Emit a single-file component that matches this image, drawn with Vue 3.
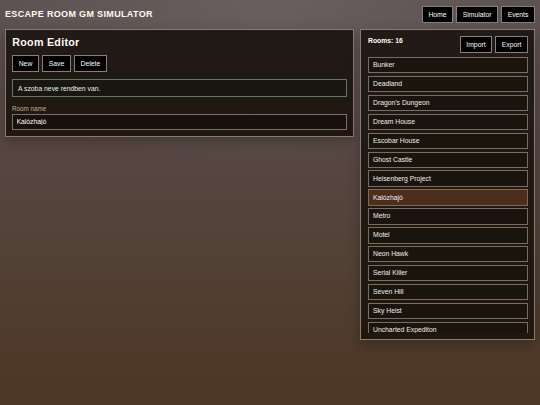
<template>
  <div class="page">
    <header class="topbar">
      <h1 class="brand">ESCAPE ROOM GM SIMULATOR</h1>
      <nav class="actions">
        <button v-for="link in links" :key="link" class="btn">{{ link }}</button>
      </nav>
    </header>

    <main class="layout">
      <section class="panel editor">
        <h2 class="title">Room Editor</h2>
        <div class="actions">
          <button class="btn" @click="createRoom">New</button>
          <button class="btn" @click="saveRoom">Save</button>
          <button class="btn" @click="deleteRoom">Delete</button>
        </div>
        <p class="status">A szoba neve rendben van.</p>
        <label for="room-name" class="field-label">Room name</label>
        <input id="room-name" v-model="roomName" class="field" type="text" spellcheck="false" />
      </section>

      <aside class="panel rooms">
        <div class="rooms-header">
          <strong class="count">Rooms: {{ rooms.length }}</strong>
          <div class="actions">
            <button class="btn">Import</button>
            <button class="btn">Export</button>
          </div>
        </div>
        <div class="room-list">
          <button
            v-for="(room, index) in rooms"
            :key="index"
            class="room"
            :class="{ active: index === selected }"
            @click="selectRoom(index)"
          >{{ room }}</button>
        </div>
      </aside>
    </main>
  </div>
</template>

<script setup>
import { ref } from 'vue';

const links = ['Home', 'Simulator', 'Events'];

const rooms = ref([
  'Bunker',
  'Deadland',
  "Dragon's Dungeon",
  'Dream House',
  'Escobar House',
  'Ghost Castle',
  'Heisenberg Project',
  'Kalózhajó',
  'Metro',
  'Motel',
  'Neon Hawk',
  'Serial Killer',
  'Seven Hill',
  'Sky Heist',
  'Uncharted Expediton',
  '',
]);

const selected = ref(7);
const roomName = ref(rooms.value[selected.value]);

const selectRoom = (index) => {
  selected.value = index;
  roomName.value = rooms.value[index];
};

const createRoom = () => {
  selected.value = -1;
  roomName.value = '';
};

const saveRoom = () => {
  if (selected.value < 0) {
    rooms.value.push(roomName.value);
    selected.value = rooms.value.length - 1;
  } else {
    rooms.value[selected.value] = roomName.value;
  }
};

const deleteRoom = () => {
  if (selected.value < 0) return;
  rooms.value.splice(selected.value, 1);
  createRoom();
};
</script>

<style>
body {
  margin: 0;
  overflow: hidden;
}
</style>

<style scoped>
.page {
  box-sizing: border-box;
  height: 100vh;
  padding: 6px 5px;
  color: #fffaf5;
  font-family: "Liberation Sans", Arial, sans-serif;
  font-size: 6.8px;
  background:
    radial-gradient(ellipse 60% 42% at 50% 0, rgba(118, 112, 110, 0.5), transparent),
    linear-gradient(180deg, #5c4f50 0%, #574744 36%, #503f31 72%, #4f3a2b 85%, #4c3625 100%);
}

.topbar {
  display: flex;
  align-items: center;
  justify-content: space-between;
  height: 17px;
  margin-bottom: 6px;
}

.brand {
  margin: 0;
  font-size: 9px;
  line-height: 11px;
  letter-spacing: 0.34px;
}

.actions {
  display: flex;
  gap: 3px;
}

.btn {
  box-sizing: border-box;
  height: 17px;
  padding: 0 5.6px;
  border: 1px solid #85807c;
  background: #000;
  color: #fffaf5;
  font: inherit;
  line-height: 15px;
  cursor: pointer;
}

.layout {
  display: grid;
  grid-template-columns: 349px 175px;
  gap: 6px;
  align-items: start;
}

.panel {
  box-sizing: border-box;
  padding: 6px;
  border: 1px solid #8c7c70;
  background: linear-gradient(180deg, #221a17, #20170f);
  box-shadow: 0 5px 12px rgba(0, 0, 0, 0.25);
}

.editor {
  height: 108px;
}

.editor .btn {
  padding: 0 5.7px;
}

.title {
  margin: 0 0 6px;
  padding-left: 0.3px;
  font-size: 10.7px;
  line-height: 13px;
  letter-spacing: 0.28px;
}

.status {
  box-sizing: border-box;
  height: 18px;
  margin: 7px 0 8px;
  padding: 1px 5px 0;
  border: 1px solid #62796a;
  background: #19150f;
  color: #e2f2e4;
  line-height: 16px;
}

.field-label {
  display: block;
  margin-bottom: 1px;
  color: #c4ab92;
  font-size: 6.3px;
  line-height: 8px;
}

.field {
  display: block;
  box-sizing: border-box;
  width: 100%;
  height: 16px;
  padding: 0 3.5px 1px;
  border: 1px solid #7c7066;
  outline: none;
  background: #17110d;
  color: #fffaf5;
  font: inherit;
}

.rooms {
  height: 311px;
  padding-left: 7px;
}

.rooms-header {
  display: flex;
  justify-content: space-between;
  height: 21px;
}

.count {
  line-height: 9px;
}

.room-list {
  display: flex;
  flex-direction: column;
  gap: 2.53px;
  height: 276px;
  overflow: hidden;
}

.room {
  box-sizing: border-box;
  flex: 0 0 16.4px;
  padding: 0 4px;
  border: 1px solid #7a6c5e;
  background: #1a140f;
  color: #f2ece6;
  font: inherit;
  line-height: 14px;
  text-align: left;
  cursor: pointer;
}

.room.active {
  border-color: #86694f;
  background: #4b2e1d;
}
</style>
